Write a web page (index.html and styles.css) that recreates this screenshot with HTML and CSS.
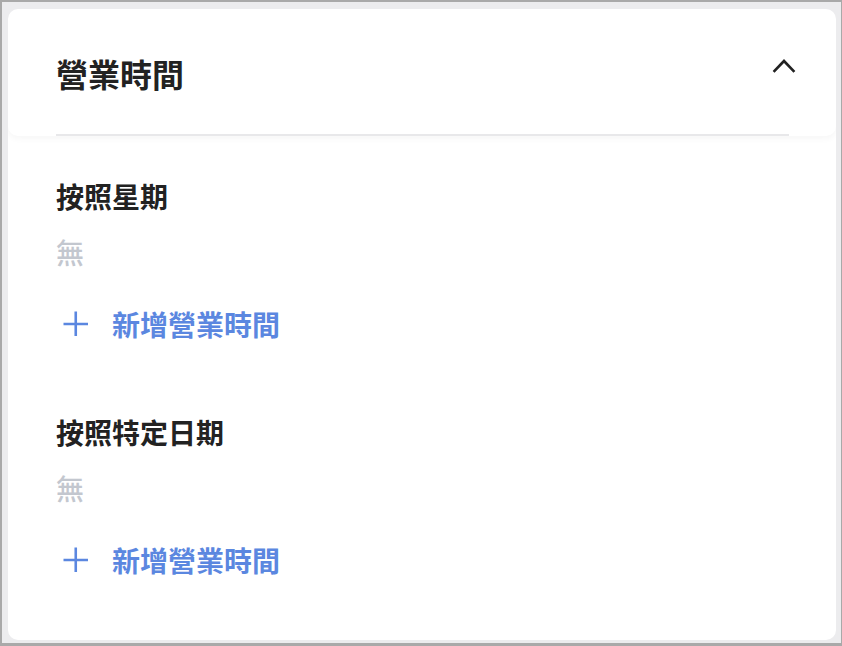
FILE: index.html
```html
<!DOCTYPE html>
<html lang="zh-Hant">
<head>
<meta charset="utf-8">
<title>營業時間</title>
<link rel="stylesheet" href="styles.css">
</head>
<body>
<div class="frame">
  <section class="card">
    <header class="card-head">
      <div class="head-row">
        <h1 class="title">營業時間</h1>
        <svg class="chevron" width="28" height="28" viewBox="0 0 28 28" aria-hidden="true">
          <polyline points="4.5,16 14,6 23.5,16" fill="none" stroke="#222" stroke-width="2.6" stroke-linecap="square" stroke-linejoin="miter"/>
        </svg>
      </div>
      <div class="divider"></div>
    </header>

    <div class="card-body">
      <div class="group">
        <h2 class="group-title">按照星期</h2>
        <p class="empty">無</p>
        <button class="add" type="button">
          <svg class="plus" width="40" height="40" viewBox="0 0 40 40" aria-hidden="true">
            <path d="M7.5 20H32M19.75 7.5V32" stroke="#5b87e0" stroke-width="2.6"/>
          </svg>
          <span>新增營業時間</span>
        </button>
      </div>

      <div class="group">
        <h2 class="group-title">按照特定日期</h2>
        <p class="empty">無</p>
        <button class="add" type="button">
          <svg class="plus" width="40" height="40" viewBox="0 0 40 40" aria-hidden="true">
            <path d="M7.5 20H32M19.75 7.5V32" stroke="#5b87e0" stroke-width="2.6"/>
          </svg>
          <span>新增營業時間</span>
        </button>
      </div>
    </div>
  </section>
</div>
</body>
</html>
```

FILE: styles.css
```css
* { box-sizing: border-box; }

html, body {
  margin: 0;
  padding: 0;
}

body {
  font-family: "Noto Sans CJK TC", "Noto Sans", sans-serif;
  color: #222;
}

.frame {
  width: 842px;
  height: 646px;
  border: 2px solid #a9a9a9;
  border-right-width: 1px;
  border-bottom-width: 3px;
  background: #ececee;
  padding: 7px 5px 3px 6px;
}

.card {
  height: 100%;
  background: #fff;
  border-radius: 10px;
  overflow: hidden;
}

.card-head {
  border-radius: 10px;
  box-shadow: 0 3px 6px rgba(0, 0, 0, 0.035);
  padding-top: 40px;
}

.head-row {
  display: flex;
  align-items: center;
  justify-content: space-between;
  padding: 0 38px 0 48px;
  height: 48px;
}

.title {
  margin: 0;
  font-size: 32px;
  line-height: 48px;
  font-weight: 700;
  letter-spacing: 0;
}

.chevron {
  display: block;
  margin-top: -8px;
}

.divider {
  height: 2px;
  background: #e8e8ea;
  margin: 37px 47px 0 48px;
}

.card-body {
  padding: 40px 48px 0 48px;
}

.group + .group {
  margin-top: 68px;
}

.group-title {
  margin: 0;
  font-size: 28px;
  line-height: 40px;
  font-weight: 700;
}

.empty {
  margin: 16px 0 0;
  font-size: 28px;
  line-height: 40px;
  font-weight: 500;
  color: #c3c7cf;
}

.add {
  display: flex;
  align-items: center;
  margin-top: 32px;
  padding: 0;
  border: 0;
  background: none;
  font-family: inherit;
  font-size: 28px;
  line-height: 40px;
  font-weight: 700;
  color: #5b87e0;
  cursor: pointer;
}

.plus {
  display: block;
  margin-right: 16px;
}
```
